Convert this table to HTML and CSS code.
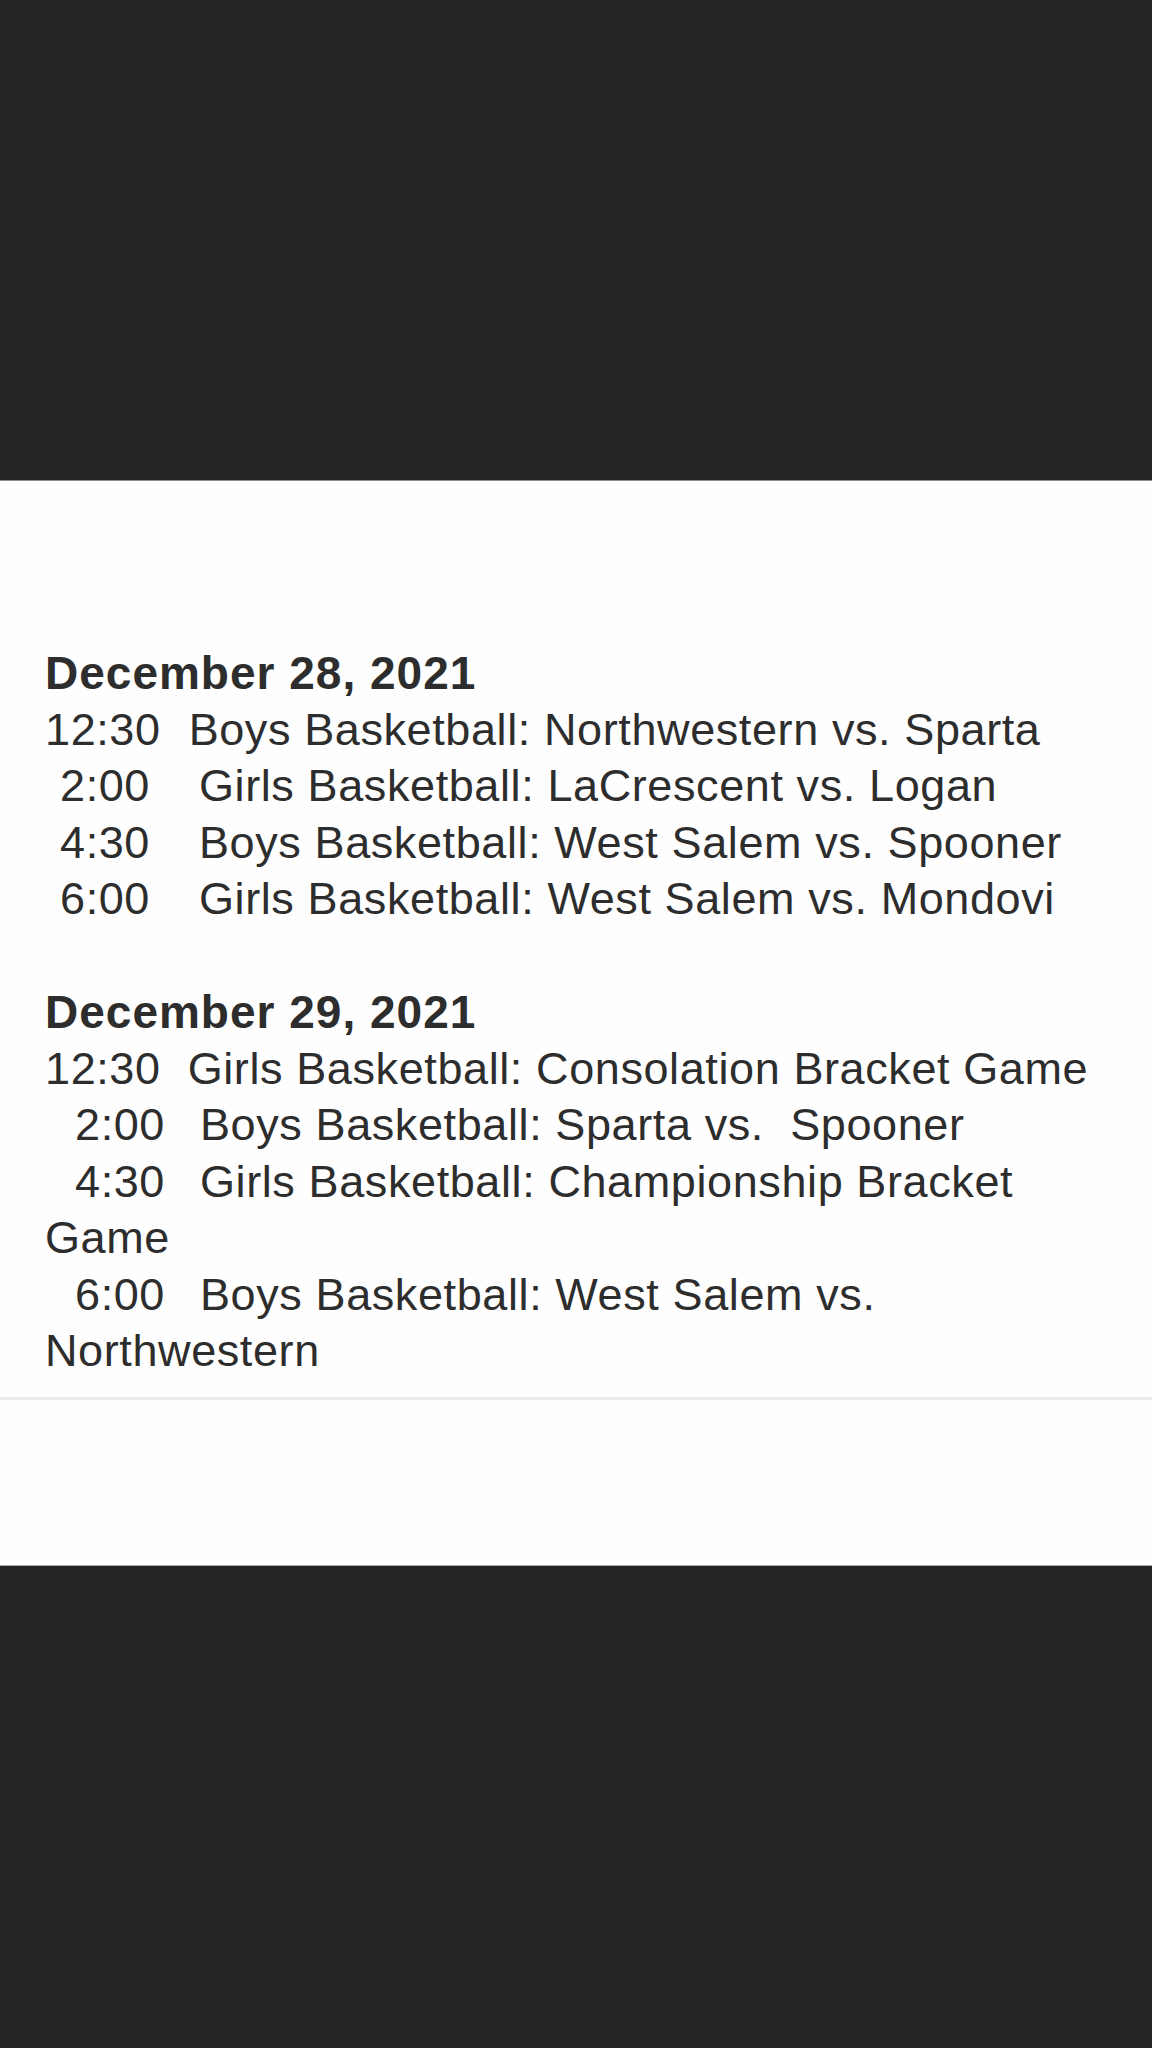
FILE: index.html
```html
<!DOCTYPE html>
<html lang="en">
<head>
<meta charset="utf-8">
<title>Schedule</title>
<link rel="stylesheet" href="styles.css">
</head>
<body>
<div class="band band-top"></div>
<main class="sheet">
  <div class="post">
    <section class="day">
      <h2 class="date">December 28, 2021</h2>
      <p class="game"><span class="time t-a">12:30</span>Boys Basketball: Northwestern vs. Sparta</p>
      <p class="game"><span class="time t-b">2:00</span>Girls Basketball: LaCrescent vs. Logan</p>
      <p class="game"><span class="time t-b">4:30</span>Boys Basketball: West Salem vs. Spooner</p>
      <p class="game"><span class="time t-b">6:00</span>Girls Basketball: West Salem vs. Mondovi</p>
    </section>
    <section class="day">
      <h2 class="date">December 29, 2021</h2>
      <p class="game"><span class="time t-c">12:30</span>Girls Basketball: Consolation Bracket Game</p>
      <p class="game"><span class="time t-d">2:00</span>Boys Basketball: Sparta vs.&nbsp; Spooner</p>
      <p class="game"><span class="time t-d">4:30</span>Girls Basketball: Championship Bracket Game</p>
      <p class="game"><span class="time t-d">6:00</span>Boys Basketball: West Salem vs. Northwestern</p>
    </section>
  </div>
  <hr class="rule">
</main>
<div class="band band-bottom"></div>
</body>
</html>
```

FILE: styles.css
```css
html, body {
  margin: 0;
  padding: 0;
}

body {
  background: #242527;
  font-family: "Liberation Sans", Arial, sans-serif;
  color: #2d2d2d;
}

.band {
  background: #242527;
}

.band-top {
  height: 480px;
  border-bottom: 1px solid #8c8c8c;
}

.band-bottom {
  height: 482px;
}

.sheet {
  background: #fefefe;
  padding: 164px 0 165px 0;
  border-bottom: 1px solid #a9a9a9;
}

.post {
  padding: 0 32px 0 45px;
  font-size: 45px;
  line-height: 56.5px;
  letter-spacing: 0.6px;
}

.day + .day {
  margin-top: 56.5px;
}

.date {
  margin: 0;
  font-size: 46px;
  line-height: 56.5px;
  font-weight: 700;
  letter-spacing: 1px;
}

.game {
  margin: 0;
}

.time {
  display: inline;
}

.t-a { margin-right: 28px; }
.t-b { padding-left: 15px; margin-right: 49px; }
.t-c { margin-right: 27px; }
.t-d { padding-left: 30px; margin-right: 35px; }

.rule {
  margin: 17px 0 0 0;
  border: 0;
  height: 3px;
  background: #ebebeb;
}
```
